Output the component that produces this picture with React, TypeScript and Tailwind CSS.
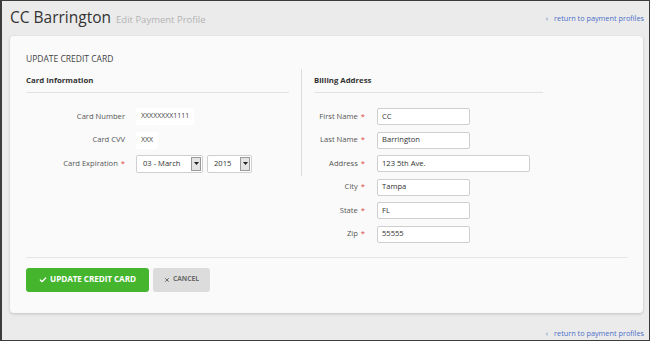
import { Check, X } from 'lucide-react'

const Req = () => <span className="text-[#d9453c] ml-[3px]">*</span>

const Field = ({ label, value, width, required = true }: { label: string; value: string; width: string; required?: boolean }) => (
  <div className="flex items-center h-[17px]">
    <div className="w-[51px] text-right text-[#555] whitespace-nowrap">
      {label}
      {required && <Req />}
    </div>
    <div
      className={`ml-[12px] h-[17px] ${width} bg-white border border-[#cfcfcf] rounded-[2px] px-[4px] flex items-center text-[#333]`}
    >
      {value}
    </div>
  </div>
)

const SelectBox = ({ value, width }: { value: string; width: string }) => (
  <div className={`h-[18px] ${width} bg-white border border-[#cfcfcf] rounded-[2px] flex items-center justify-between pl-[6px] pr-[1px] text-[#333]`}>
    <span>{value}</span>
    <div className="w-[10px] h-[14px] bg-[#e4e4e4] border border-[#9a9a9a] flex items-center justify-center">
      <svg width="5" height="3" viewBox="0 0 5 3">
        <path d="M0 0 L5 0 L2.5 3 Z" fill="#222" />
      </svg>
    </div>
  </div>
)

const ReturnLink = () => (
  <a className="text-[7.3px] text-[#4b6fc8] flex items-center gap-[6px] whitespace-nowrap">
    <span>‹</span>
    <span>return to payment profiles</span>
  </a>
)

export default function App() {
  return (
    <div className="w-[650px] h-[341px] box-border border border-l-2 border-[#3c3c3c] bg-[#ebebeb] font-['Open_Sans',sans-serif] flex flex-col overflow-hidden">
      {/* header */}
      <div className="h-[35px] flex items-center justify-between pl-[8px] pr-[5px]">
        <div className="flex items-baseline gap-[5px]">
          <h1 className="text-[15.5px] text-[#333] leading-none">CC Barrington</h1>
          <span className="text-[9.5px] text-[#b3b3b3]">Edit Payment Profile</span>
        </div>
        <ReturnLink />
      </div>

      {/* card */}
      <div className="ml-[8px] w-[633px] h-[277px] bg-[#fafafa] rounded-[4px] shadow-[0_1px_3px_rgba(0,0,0,0.18)] pl-[16px] pr-[15px] pt-[17px] text-[7.6px]">
        <div className="h-[12px] leading-[12px] text-[8.5px] text-[#444]">UPDATE CREDIT CARD</div>

        <div className="flex mt-[4px]">
          {/* card information */}
          <div className="w-[276px] pr-[12px] border-r border-[#dcdcdc] pb-[4px] self-start">
            <div className="h-[24px] border-b border-[#e2e2e2] flex items-center font-bold text-[7.8px] text-[#333] pt-[1px]">
              Card Information
            </div>
            <div className="mt-[15px] flex flex-col gap-[6.5px]">
              <div className="flex items-center h-[17px]">
                <div className="w-[99px] text-right text-[#555]">Card Number</div>
                <div className="ml-[11px] h-[17px] bg-white rounded-[2px] px-[5px] flex items-center text-[#444] text-[7px]">XXXXXXXX1111</div>
              </div>
              <div className="flex items-center h-[17px]">
                <div className="w-[99px] text-right text-[#555]">Card CVV</div>
                <div className="ml-[11px] h-[17px] bg-white rounded-[2px] px-[5px] flex items-center text-[#444] text-[7px]">XXX</div>
              </div>
              <div className="flex items-center h-[17px]">
                <div className="w-[99px] text-right text-[#555]">
                  Card Expiration
                  <Req />
                </div>
                <div className="ml-[11px] flex gap-[4px]">
                  <SelectBox value="03 - March" width="w-[67px]" />
                  <SelectBox value="2015" width="w-[45px]" />
                </div>
              </div>
            </div>
          </div>

          {/* billing address */}
          <div className="ml-[12px] w-[229px]">
            <div className="h-[24px] border-b border-[#e2e2e2] flex items-center font-bold text-[7.8px] text-[#333] pt-[1px]">
              Billing Address
            </div>
            <div className="mt-[15px] flex flex-col gap-[6.5px]">
              <Field label="First Name" value="CC" width="w-[93px]" />
              <Field label="Last Name" value="Barrington" width="w-[93px]" />
              <Field label="Address" value="123 5th Ave." width="w-[153px]" />
              <Field label="City" value="Tampa" width="w-[93px]" />
              <Field label="State" value="FL" width="w-[93px]" />
              <Field label="Zip" value="55555" width="w-[93px]" />
            </div>
          </div>
        </div>

        <div className="mt-[14px] border-t border-[#e6e6e6]" />

        <div className="mt-[10px] flex gap-[4px]">
          <button className="h-[24px] w-[123px] bg-[#45b52e] rounded-[3px] text-white font-bold text-[8.2px] flex items-center justify-center gap-[3px] tracking-[-0.1px]">
            <Check size={8} strokeWidth={4} />
            UPDATE CREDIT CARD
          </button>
          <button className="h-[24px] w-[57px] bg-[#dcdcdc] rounded-[3px] text-[#6a6a6a] font-bold text-[6.7px] flex items-center justify-center gap-[3px]">
            <X size={6} strokeWidth={4} />
            CANCEL
          </button>
        </div>
      </div>

      {/* footer link */}
      <div className="flex-1 flex items-end justify-end pr-[5px] pb-[1px]">
        <ReturnLink />
      </div>
    </div>
  )
}
